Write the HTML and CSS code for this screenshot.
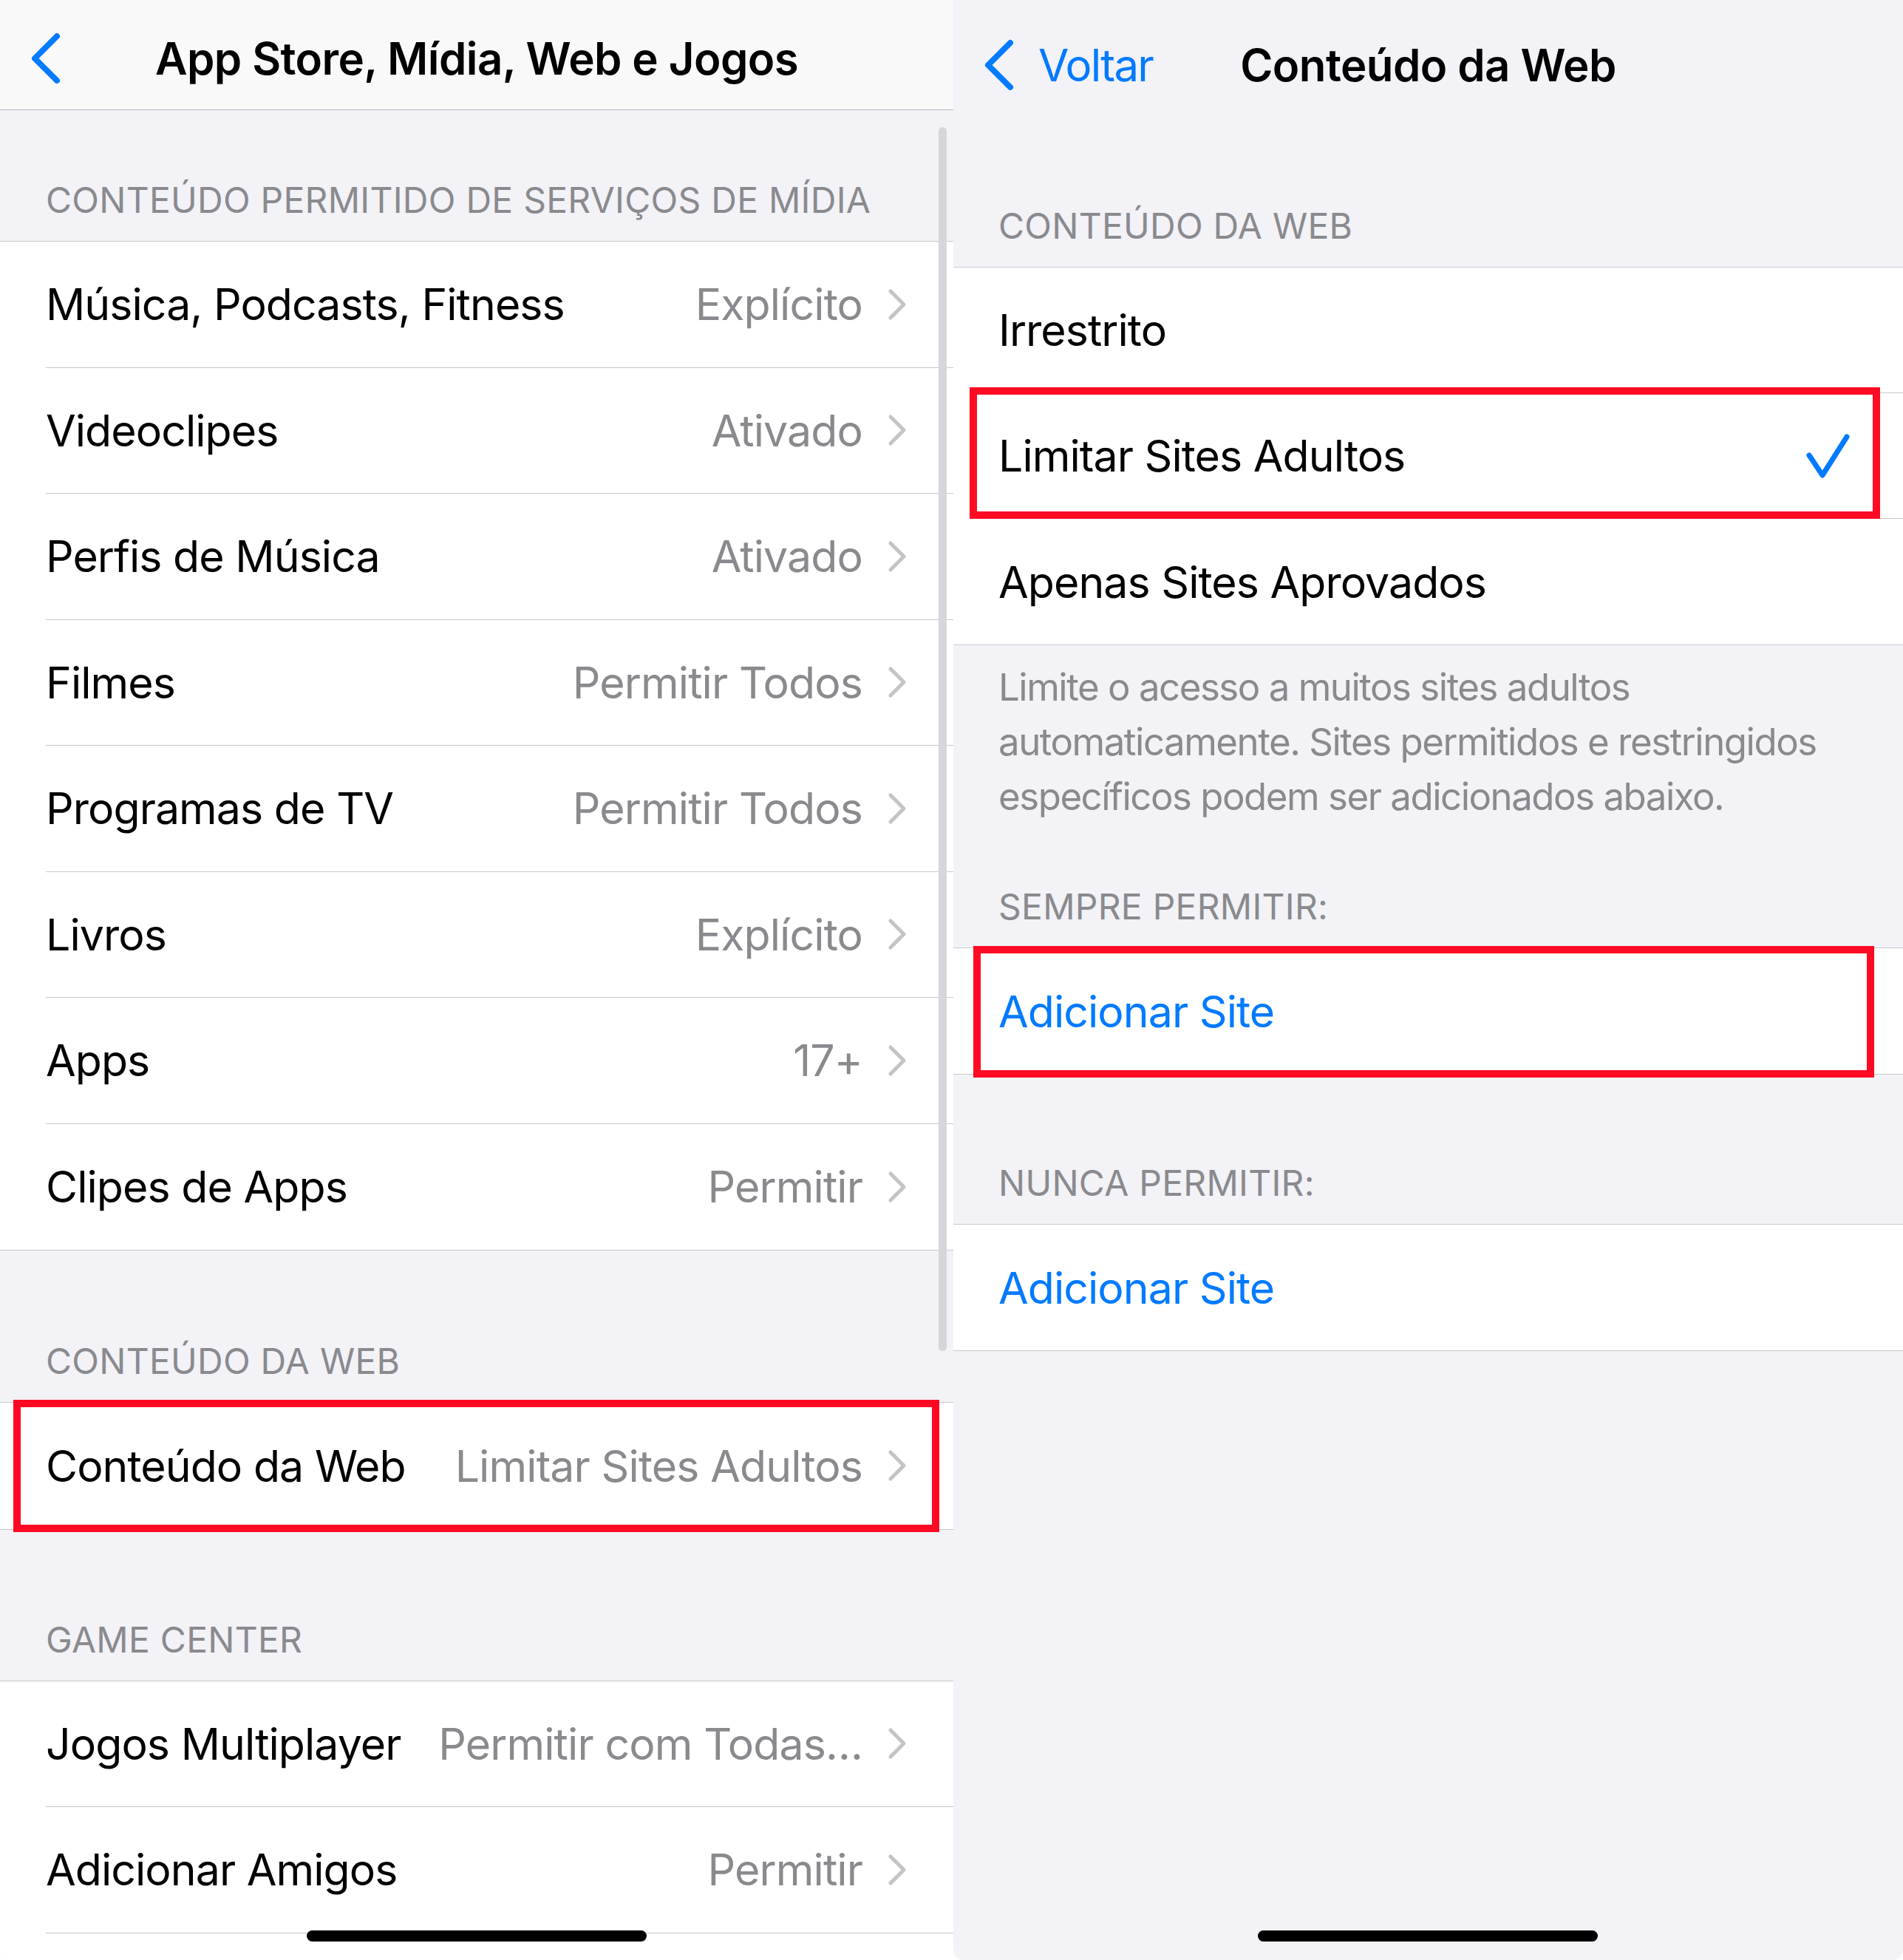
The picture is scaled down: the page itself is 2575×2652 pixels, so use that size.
FILE: index.html
```html
<!DOCTYPE html>
<html lang="pt-BR">
<head>
<meta charset="utf-8">
<title>Conteúdo da Web</title>
<link rel="stylesheet" href="styles.css">
</head>
<body>
<div class="panel left">
  <div class="nav nav-left">
    <div class="back">
      <svg class="back-chev" width="44" height="70" viewBox="0 0 44 70"><polyline points="37,5 7,35 37,65" fill="none" stroke="#007aff" stroke-width="8" stroke-linecap="round" stroke-linejoin="round"/></svg>
    </div>
    <div class="title">App Store, Mídia, Web e Jogos</div>
    <div></div>
  </div>

  <div class="sec-header h177">Conteúdo permitido de serviços de mídia</div>
  <div class="group">
    <div class="row"><div class="row-body"><span class="label">Música, Podcasts, Fitness</span><span class="value">Explícito</span><svg class="chev" width="27" height="44" viewBox="0 0 27 44"><polyline points="5,4 23,22 5,40" fill="none" stroke="#c4c4c7" stroke-width="5" stroke-linecap="round" stroke-linejoin="round"/></svg></div></div>
    <div class="row"><div class="row-body"><span class="label">Videoclipes</span><span class="value">Ativado</span><svg class="chev" width="27" height="44" viewBox="0 0 27 44"><polyline points="5,4 23,22 5,40" fill="none" stroke="#c4c4c7" stroke-width="5" stroke-linecap="round" stroke-linejoin="round"/></svg></div></div>
    <div class="row"><div class="row-body"><span class="label">Perfis de Música</span><span class="value">Ativado</span><svg class="chev" width="27" height="44" viewBox="0 0 27 44"><polyline points="5,4 23,22 5,40" fill="none" stroke="#c4c4c7" stroke-width="5" stroke-linecap="round" stroke-linejoin="round"/></svg></div></div>
    <div class="row"><div class="row-body"><span class="label">Filmes</span><span class="value">Permitir Todos</span><svg class="chev" width="27" height="44" viewBox="0 0 27 44"><polyline points="5,4 23,22 5,40" fill="none" stroke="#c4c4c7" stroke-width="5" stroke-linecap="round" stroke-linejoin="round"/></svg></div></div>
    <div class="row"><div class="row-body"><span class="label">Programas de TV</span><span class="value">Permitir Todos</span><svg class="chev" width="27" height="44" viewBox="0 0 27 44"><polyline points="5,4 23,22 5,40" fill="none" stroke="#c4c4c7" stroke-width="5" stroke-linecap="round" stroke-linejoin="round"/></svg></div></div>
    <div class="row"><div class="row-body"><span class="label">Livros</span><span class="value">Explícito</span><svg class="chev" width="27" height="44" viewBox="0 0 27 44"><polyline points="5,4 23,22 5,40" fill="none" stroke="#c4c4c7" stroke-width="5" stroke-linecap="round" stroke-linejoin="round"/></svg></div></div>
    <div class="row"><div class="row-body"><span class="label">Apps</span><span class="value">17+</span><svg class="chev" width="27" height="44" viewBox="0 0 27 44"><polyline points="5,4 23,22 5,40" fill="none" stroke="#c4c4c7" stroke-width="5" stroke-linecap="round" stroke-linejoin="round"/></svg></div></div>
    <div class="row"><div class="row-body"><span class="label">Clipes de Apps</span><span class="value">Permitir</span><svg class="chev" width="27" height="44" viewBox="0 0 27 44"><polyline points="5,4 23,22 5,40" fill="none" stroke="#c4c4c7" stroke-width="5" stroke-linecap="round" stroke-linejoin="round"/></svg></div></div>
  </div>

  <div class="sec-header h205">Conteúdo da Web</div>
  <div class="group">
    <div class="row marked"><div class="row-body"><span class="label">Conteúdo da Web</span><span class="value">Limitar Sites Adultos</span><svg class="chev" width="27" height="44" viewBox="0 0 27 44"><polyline points="5,4 23,22 5,40" fill="none" stroke="#c4c4c7" stroke-width="5" stroke-linecap="round" stroke-linejoin="round"/></svg></div><div class="redbox rb-left"></div></div>
  </div>

  <div class="sec-header h204">Game Center</div>
  <div class="group">
    <div class="row"><div class="row-body"><span class="label">Jogos Multiplayer</span><span class="value">Permitir com Todas…</span><svg class="chev" width="27" height="44" viewBox="0 0 27 44"><polyline points="5,4 23,22 5,40" fill="none" stroke="#c4c4c7" stroke-width="5" stroke-linecap="round" stroke-linejoin="round"/></svg></div></div>
    <div class="row"><div class="row-body"><span class="label">Adicionar Amigos</span><span class="value">Permitir</span><svg class="chev" width="27" height="44" viewBox="0 0 27 44"><polyline points="5,4 23,22 5,40" fill="none" stroke="#c4c4c7" stroke-width="5" stroke-linecap="round" stroke-linejoin="round"/></svg></div></div>
    <div class="row"><div class="row-body"></div></div>
  </div>

  <div class="scrollbar"></div>
  <div class="home-indicator hi-left"></div>
</div>

<div class="panel right">
  <div class="nav nav-right">
    <div class="back">
      <svg class="back-chev" width="44" height="70" viewBox="0 0 44 70"><polyline points="37,5 7,35 37,65" fill="none" stroke="#007aff" stroke-width="8" stroke-linecap="round" stroke-linejoin="round"/></svg>
      <span class="back-label">Voltar</span>
    </div>
    <div class="title">Conteúdo da Web</div>
    <div></div>
  </div>

  <div class="sec-header h185">Conteúdo da Web</div>
  <div class="group">
    <div class="row"><div class="row-body"><span class="label">Irrestrito</span></div></div>
    <div class="row marked"><div class="row-body check-body"><span class="label">Limitar Sites Adultos</span><svg class="check" width="66" height="66" viewBox="0 0 66 66"><polyline points="8,32 26,59 59,7" fill="none" stroke="#007aff" stroke-width="7" stroke-linecap="round" stroke-linejoin="round"/></svg></div><div class="redbox rb-r1"></div></div>
    <div class="row"><div class="row-body"><span class="label">Apenas Sites Aprovados</span></div></div>
  </div>
  <div class="footer"><span class="fline">Limite o acesso a muitos sites adultos</span><span class="fline">automaticamente. Sites permitidos e restringidos</span><span class="fline">específicos podem ser adicionados abaixo.</span></div>

  <div class="sec-header h170">Sempre permitir:</div>
  <div class="group">
    <div class="row marked"><div class="row-body"><span class="label link">Adicionar Site</span></div><div class="redbox rb-r2"></div></div>
  </div>

  <div class="sec-header h202">Nunca permitir:</div>
  <div class="group">
    <div class="row"><div class="row-body"><span class="label link">Adicionar Site</span></div></div>
  </div>

  <div class="home-indicator hi-right"></div>
</div>
</body>
</html>
```

FILE: styles.css
```css
html, body {
  margin: 0;
  padding: 0;
}

body {
  width: 2575px;
  height: 2652px;
  overflow: hidden;
  display: flex;
  background: #ffffff;
  font-family: Inter, "Noto Sans", "Liberation Sans", sans-serif;
  color: #000000;
}

.panel {
  position: relative;
  height: 2652px;
  overflow: hidden;
  background: #f2f2f7;
  border-radius: 0 0 14px 14px;
  flex: none;
}

.left { width: 1290px; }
.right { width: 1285px; }

/* navigation bars */
.nav {
  display: grid;
  grid-template-columns: 1fr auto 1fr;
  align-items: center;
  box-sizing: border-box;
}

.nav-left {
  height: 149px;
  padding-top: 10px;
  background: #f9f9f9;
  border-bottom: 1px solid #b9b9bc;
}

.nav-right {
  height: 176px;
  padding-top: 0;
}

.back {
  display: flex;
  align-items: center;
  padding-left: 40px;
}

.back-chev { display: block; }

.back-label {
  margin-left: 31px;
  color: #007aff;
  font-size: 60px;
  letter-spacing: -1.8px;
}

.title {
  font-size: 60px;
  font-weight: 600;
  letter-spacing: -0.6px;
  white-space: nowrap;
}

/* section headers */
.sec-header {
  box-sizing: border-box;
  display: flex;
  align-items: flex-end;
  padding: 0 62px 31px 62px;
  font-size: 48px;
  line-height: 48px;
  color: #8a8a8e;
  text-transform: uppercase;
  letter-spacing: 0.25px;
  white-space: nowrap;
}

.right .sec-header { padding-left: 61px; }

.h177 { height: 177px; }
.h205 { height: 205px; }
.h204 { height: 204px; }
.h185 { height: 185px; }
.h170 { height: 169px; }
.h202 { height: 202px; }

/* grouped list */
.group {
  background: #ffffff;
  border-top: 1px solid #c8c7cc;
  border-bottom: 1px solid #c8c7cc;
}

.row {
  position: relative;
  height: 170.5px;
  padding-left: 62px;
  box-sizing: border-box;
  display: flex;
}

.right .row { padding-left: 61px; height: 170px; }

.row-body {
  flex: 1;
  display: flex;
  align-items: center;
  padding-right: 63px;
  border-bottom: 1px solid #c8c7cc;
  min-width: 0;
}

.row:last-child .row-body { border-bottom: none; }

.label {
  font-size: 59px;
  letter-spacing: -0.95px;
  white-space: nowrap;
}

.label.link { color: #007aff; }

.value {
  margin-left: auto;
  padding-left: 30px;
  font-size: 59px;
  letter-spacing: -0.9px;
  color: #8a8a8e;
  white-space: nowrap;
}

.chev {
  flex: none;
  margin-left: 33px;
  display: block;
}

.check-body { padding-right: 69px; }

.check {
  margin-left: auto;
  display: block;
  flex: none;
}

/* footer text */
.footer {
  padding: 20px 40px 0 61px;
  height: 240px;
  box-sizing: border-box;
  font-size: 51px;
  line-height: 74px;
  color: #8a8a8e;
  letter-spacing: -1.5px;
}

.fline {
  display: block;
  white-space: nowrap;
}

/* annotation boxes */
.redbox {
  position: absolute;
  border: 10px solid #ff0a23;
  pointer-events: none;
}

.rb-left { left: 18px; right: 19px; top: -4px; bottom: -4px; }
.rb-r1 { left: 22px; right: 31px; top: -8px; bottom: 0; }
.rb-r2 { left: 27px; right: 39px; top: -3px; bottom: -5px; }

/* overlays */
.scrollbar {
  position: absolute;
  left: 1270px;
  top: 172px;
  width: 11px;
  height: 1656px;
  border-radius: 6px;
  background: #d6d6da;
}

.home-indicator {
  position: absolute;
  bottom: 25px;
  width: 460px;
  height: 15px;
  border-radius: 8px;
  background: #000000;
}

.hi-left { left: 415px; }
.hi-right { left: 412px; }
```
